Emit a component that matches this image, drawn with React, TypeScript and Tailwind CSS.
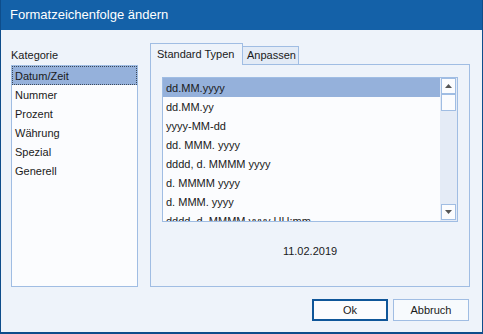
import React from "react";

const categories = ["Datum/Zeit", "Nummer", "Prozent", "Währung", "Spezial", "Generell"];

const formats = [
  "dd.MM.yyyy",
  "dd.MM.yy",
  "yyyy-MM-dd",
  "dd. MMM. yyyy",
  "dddd, d. MMMM yyyy",
  "d. MMMM yyyy",
  "d. MMM. yyyy",
  "dddd, d. MMMM yyyy HH:mm",
];

const App = () => {
  return (
    <div
      className="flex h-[334px] w-[483px] flex-col border-x border-b-2 border-[#0E4D8B] bg-[#EEF3FA] text-[11px] text-[#1a1a1a]"
      style={{ fontFamily: '"Liberation Sans", Arial, sans-serif' }}
    >
      <div className="flex h-[30px] shrink-0 items-center bg-[#1461A8] pl-[9px] text-[13px] text-white">
        Formatzeichenfolge ändern
      </div>

      <div className="flex pl-[10px]">
        {/* Kategorie */}
        <div className="flex w-[127px] flex-col pt-[18px]">
          <div className="mb-[2px] h-[15px] leading-[15px]">Kategorie</div>
          <div className="h-[222px] border border-[#A0BDE3] bg-[#FBFCFE]">
            {categories.map((c, i) => (
              <div
                key={c}
                className={
                  i === 0
                    ? "flex h-[19px] items-center border border-dotted border-[#3c4a5c] bg-[#95B1DB] pl-[2px] pt-[2px]"
                    : "flex h-[19px] items-center pl-[3px] pt-[2px]"
                }
              >
                {c}
              </div>
            ))}
          </div>
        </div>

        {/* Tabs */}
        <div className="ml-[12px] flex w-[320px] flex-col pt-[13px]">
          <div className="flex h-[21px] items-end">
            <div className="relative z-10 -mb-px flex h-[22px] w-[93px] items-center border border-b-0 border-[#A0BDE3] bg-[#EEF3FA] pl-[6px] pb-px">
              Standard Typen
            </div>
            <div className="flex h-[18px] w-[56px] items-center border border-l-0 border-b-0 border-[#A0BDE3] bg-[#E3EBF6] pl-[4px]">
              Anpassen
            </div>
          </div>
          <div className="flex h-[223px] flex-col items-center border border-[#A0BDE3] px-[11px] pt-[12px]">
            <div className="flex h-[145px] w-full border border-[#A0BDE3] bg-[#FBFCFE]">
              <div className="flex-1 overflow-hidden">
                {formats.map((f, i) => (
                  <div
                    key={f}
                    className={
                      i === 0
                        ? "flex h-[19px] shrink-0 items-center bg-[#95B1DB] pl-[3px] pt-px"
                        : "flex h-[19px] shrink-0 items-center pl-[3px] pt-px"
                    }
                  >
                    {f}
                  </div>
                ))}
              </div>
              <div className="flex w-[17px] flex-col justify-between bg-[#E4EBF6] pb-px pl-px pr-px">
                <div>
                  <div className="flex h-[16px] w-[15px] items-center justify-center border border-[#A0BDE3] bg-[#FBFCFE]">
                    <svg width="7" height="4" viewBox="0 0 7 4">
                      <path d="M3.5 0L7 4H0Z" fill="#555" />
                    </svg>
                  </div>
                  <div className="h-[17px] w-[15px] border border-[#A0BDE3] bg-[#FBFCFE]" />
                </div>
                <div className="flex h-[16px] w-[15px] items-center justify-center border border-[#A0BDE3] bg-[#FBFCFE]">
                  <svg width="7" height="4" viewBox="0 0 7 4">
                    <path d="M0 0H7L3.5 4Z" fill="#555" />
                  </svg>
                </div>
              </div>
            </div>
            <div className="mt-[22px] h-[15px] leading-[15px]">11.02.2019</div>
          </div>
        </div>
      </div>

      <div className="mt-[12px] flex justify-end gap-[5px] pr-[13px]">
        <button className="h-[22px] w-[76px] border-2 border-[#0F5699] bg-[#FBFCFE] text-[11px]">Ok</button>
        <button className="h-[22px] w-[76px] border border-[#A0BDE3] bg-[#F7FAFD] text-[11px]">Abbruch</button>
      </div>
    </div>
  );
};

export default App;
